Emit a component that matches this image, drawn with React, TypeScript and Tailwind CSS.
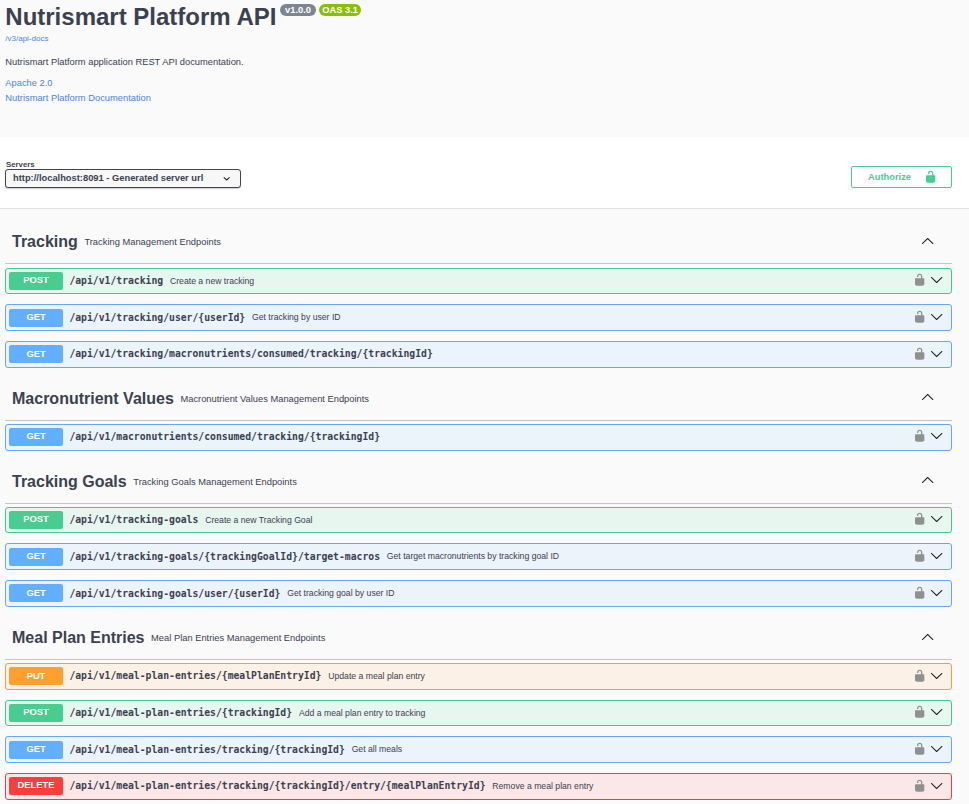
type Method = "GET" | "POST" | "PUT" | "DELETE";
type Operation = { method: Method; path: string; summary?: string };
type Section = { name: string; description: string; operations: Operation[] };

const sections: Section[] = [
  {
    name: "Tracking",
    description: "Tracking Management Endpoints",
    operations: [
      { method: "POST", path: "/api/v1/tracking", summary: "Create a new tracking" },
      { method: "GET", path: "/api/v1/tracking/user/{userId}", summary: "Get tracking by user ID" },
      { method: "GET", path: "/api/v1/tracking/macronutrients/consumed/tracking/{trackingId}" },
    ],
  },
  {
    name: "Macronutrient Values",
    description: "Macronutrient Values Management Endpoints",
    operations: [{ method: "GET", path: "/api/v1/macronutrients/consumed/tracking/{trackingId}" }],
  },
  {
    name: "Tracking Goals",
    description: "Tracking Goals Management Endpoints",
    operations: [
      { method: "POST", path: "/api/v1/tracking-goals", summary: "Create a new Tracking Goal" },
      {
        method: "GET",
        path: "/api/v1/tracking-goals/{trackingGoalId}/target-macros",
        summary: "Get target macronutrients by tracking goal ID",
      },
      { method: "GET", path: "/api/v1/tracking-goals/user/{userId}", summary: "Get tracking goal by user ID" },
    ],
  },
  {
    name: "Meal Plan Entries",
    description: "Meal Plan Entries Management Endpoints",
    operations: [
      { method: "PUT", path: "/api/v1/meal-plan-entries/{mealPlanEntryId}", summary: "Update a meal plan entry" },
      { method: "POST", path: "/api/v1/meal-plan-entries/{trackingId}", summary: "Add a meal plan entry to tracking" },
      { method: "GET", path: "/api/v1/meal-plan-entries/tracking/{trackingId}", summary: "Get all meals" },
      {
        method: "DELETE",
        path: "/api/v1/meal-plan-entries/tracking/{trackingId}/entry/{mealPlanEntryId}",
        summary: "Remove a meal plan entry",
      },
    ],
  },
];

const rowStyles: Record<Method, string> = {
  GET: "border-[#64a9f2] bg-[#ebf3fb]",
  POST: "border-[#4fc38f] bg-[#e8f6f0]",
  PUT: "border-[#f0a040] bg-[#fbf1e6]",
  DELETE: "border-[#e0444a] bg-[#fae7e7]",
};

const badgeStyles: Record<Method, string> = {
  GET: "bg-[#61affe]",
  POST: "bg-[#49cc90]",
  PUT: "bg-[#fca130]",
  DELETE: "bg-[#f93e3e]",
};

function UnlockIcon({ className }: { className: string }) {
  return (
    <svg viewBox="0 0 20 20" className={className} fill="currentColor">
      <path d="M15.8 8H14V5.6C14 2.703 12.665 1 10 1 7.334 1 6 2.703 6 5.6V6h2v-.801C8 3.754 8.797 3 10 3c1.203 0 2 .754 2 2.199V8H4c-.553 0-1 .646-1 1.199V17c0 .549.428 1.139.951 1.307l1.197.387C5.672 18.861 6.55 19 7.1 19h5.8c.549 0 1.428-.139 1.951-.307l1.196-.387c.524-.167.953-.757.953-1.306V9.199C17 8.646 16.352 8 15.8 8z" />
    </svg>
  );
}

function ArrowUp() {
  return (
    <svg viewBox="0 0 20 20" className="size-[13.33px] shrink-0" fill="#1c1c1c">
      <path d="M 17.418 14.908 C 17.69 15.176 18.127 15.176 18.397 14.908 C 18.667 14.64 18.668 14.207 18.397 13.939 L 10.489 6.109 C 10.219 5.841 9.782 5.841 9.51 6.109 L 1.602 13.939 C 1.332 14.207 1.332 14.64 1.602 14.908 C 1.873 15.176 2.311 15.176 2.581 14.908 L 10 7.767 L 17.418 14.908 Z" />
    </svg>
  );
}

function ArrowDown() {
  return (
    <svg viewBox="0 0 20 20" className="mb-[2.1px] size-[13.33px] shrink-0" fill="#1c1c1c">
      <path d="M17.418 6.109c.272-.268.709-.268.979 0s.271.701 0 .969l-7.908 7.83c-.27.268-.707.268-.979 0l-7.908-7.83c-.27-.268-.27-.701 0-.969.271-.268.709-.268.979 0L10 13.25l7.418-7.141z" />
    </svg>
  );
}

function OperationRow({ method, path, summary }: Operation) {
  return (
    <div className={`mb-[10px] flex h-[26.67px] items-center rounded-[3px] border pl-[3px] pr-[8px] ${rowStyles[method]}`}>
      <span
        className={`flex h-[18px] w-[54px] shrink-0 items-center justify-center rounded-[2px] pt-[0.5px] text-[9.33px] font-bold text-white ${badgeStyles[method]}`}
      >
        {method}
      </span>
      <span className="ml-[6.4px] pt-[1px] font-['DejaVu_Sans_Mono',monospace] text-[9.745px] font-bold whitespace-nowrap">{path}</span>
      <span className="ml-[6.8px] grow pt-[0.5px] text-[8.67px] whitespace-nowrap">{summary}</span>
      <UnlockIcon className="mr-[3.4px] mb-[2.1px] size-[13.33px] shrink-0 text-[#8f918f]" />
      <ArrowDown />
    </div>
  );
}

function TagSection({ name, description, operations }: Section) {
  return (
    <section className="pt-[10px]">
      <div className="mb-[3.2px] flex h-[33.05px] items-start border-b border-[#c3c5ca] pl-[7px] pr-[18px]">
        <h3 className="text-[16px] leading-[21px] font-bold whitespace-nowrap">{name}</h3>
        <span className="ml-[6.6px] grow pt-[1px] text-[9.33px] leading-[21px]">{description}</span>
        <span className="flex h-[19px] items-center">
          <ArrowUp />
        </span>
      </div>
      {operations.map((op) => (
        <OperationRow key={op.method + op.path} {...op} />
      ))}
    </section>
  );
}

export default function App() {
  return (
    <div className="h-[804px] w-full overflow-hidden bg-[#fafafa] font-['Liberation_Sans',Arial,sans-serif] text-[#3b4151]">
      <header className="h-[137px] pl-[5.3px] pt-[3px]">
        <div className="flex items-start">
          <h2 className="text-[24px] leading-[28px] font-bold whitespace-nowrap">Nutrismart Platform API</h2>
          <span className="ml-[3.6px] mt-[1px] flex h-[12px] w-[36px] items-center justify-center rounded-full bg-[#7d8492] pt-[1px] text-[9.33px] font-bold text-white">
            v1.0.0
          </span>
          <span className="ml-[3px] mt-[1px] flex h-[12px] w-[42px] items-center justify-center rounded-full bg-[#89bf04] pt-[1px] text-[9.33px] font-bold whitespace-nowrap text-white">
            OAS 3.1
          </span>
        </div>
        <a className="mt-[2px] block text-[8px] leading-[11px] text-[#4a86db]">/v3/api-docs</a>
        <p className="mt-[12px] text-[9.33px] leading-[12px]">Nutrismart Platform application REST API documentation.</p>
        <a className="mt-[9px] block text-[9.33px] leading-[12px] text-[#4a86db]">Apache 2.0</a>
        <a className="mt-[3px] block text-[9.33px] leading-[12px] text-[#4a86db]">Nutrismart Platform Documentation</a>
      </header>

      <div className="flex h-[72px] items-start justify-between border-b border-[#e0e0e0] bg-white pl-[5px] pr-[17px]">
        <div className="pt-[22px]">
          <div className="pt-[1px] pl-[1px] text-[7.8px] leading-[9px] font-bold">Servers</div>
          <div className="flex h-[19px] w-[236px] items-center justify-between rounded-[3px] border border-[#41444e] bg-[#f7f7f7] pl-[7px] pr-[7px] shadow-[0_1px_1px_rgba(0,0,0,0.2)]">
            <span className="text-[9.33px] font-bold whitespace-nowrap">http://localhost:8091 - Generated server url</span>
            <svg viewBox="0 0 20 20" className="size-[13.33px]" fill="#1c1c1c">
              <path d="M13.418 7.859c.271-.268.709-.268.978 0 .27.268.272.701 0 .969l-3.908 3.83c-.27.268-.707.268-.979 0l-3.908-3.83c-.27-.267-.27-.701 0-.969.271-.268.709-.268.978 0L10 11l3.418-3.141z" />
            </svg>
          </div>
        </div>
        <button className="mt-[29px] flex h-[22px] w-[101px] items-center justify-between rounded-[2px] border border-[#49cc90] pl-[16px] pr-[14px] text-[#49cc90]">
          <span className="pt-[1px] text-[9.33px] font-bold">Authorize</span>
          <UnlockIcon className="size-[13.33px]" />
        </button>
      </div>

      <main className="pl-[5px] pr-[17px] pt-[12.42px]">
        {sections.map((s) => (
          <TagSection key={s.name} {...s} />
        ))}
      </main>
    </div>
  );
}
